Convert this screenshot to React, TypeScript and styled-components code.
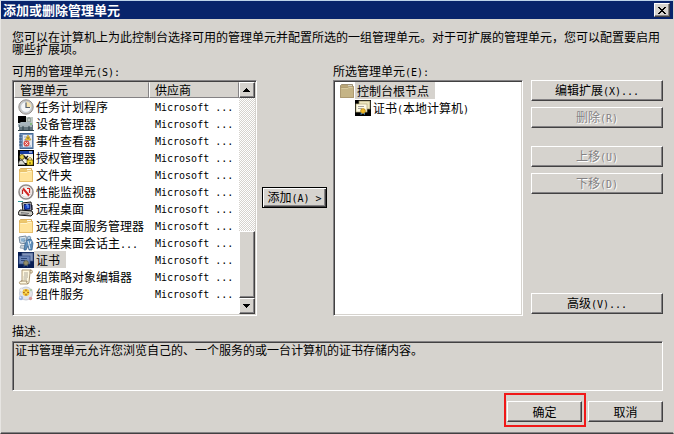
import React from "react";
import styled, { createGlobalStyle, css } from "styled-components";

const face = "#d6d3ce";
const shadow = "#848284";
const dark = "#424142";

const GlobalStyle = createGlobalStyle`
  * { box-sizing: border-box; }
  body {
    margin: 0;
    background: ${face};
    color: #000;
    font: 12px/12px "Noto Sans CJK SC", sans-serif;
  }
  button, textarea { font: inherit; color: inherit; }
`;

const sunken = css`
  border: 1px solid;
  border-color: ${shadow} #fff #fff ${shadow};
  box-shadow: inset 1px 1px 0 ${dark}, inset -1px -1px 0 ${face};
`;

const raised = css`
  border: 1px solid;
  border-color: #fff ${dark} ${dark} #fff;
  box-shadow: inset -1px -1px 0 ${shadow};
`;

const Dialog = styled.main`
  display: flex;
  flex-direction: column;
  border: 1px solid;
  border-color: #bdd3ea ${face} ${dark} #e7e5e2;
  box-shadow: inset 0 -1px 0 ${shadow};
  background: ${face};
`;

const TitleBar = styled.header`
  display: flex;
  align-items: center;
  justify-content: space-between;
  height: 18px;
  padding: 0 3px 0 2px;
  background: #08246b;
  color: #fff;
`;

const Title = styled.h1`
  margin: 0;
  font-size: 13px;
  line-height: 18px;
  font-weight: 700;
`;

const CloseButton = styled.button`
  ${raised}
  display: flex;
  align-items: center;
  justify-content: center;
  width: 16px;
  height: 14px;
  padding: 0;
  background: ${face};
`;

const Content = styled.div`
  display: flex;
  flex-direction: column;
  padding: 12px 10px 6px 11px;
`;

const Intro = styled.p`
  margin: 0;
`;

const Columns = styled.div`
  display: flex;
`;

const ListColumn = styled.section<{ $share: number }>`
  display: flex;
  flex-direction: column;
  flex: ${(p) => p.$share} 1 0;
  min-width: 0;
`;

const Caption = styled.div`
  height: 25px;
  padding-top: 10px;
  line-height: 12px;
`;

const ListBox = styled.div`
  ${sunken}
  display: flex;
  height: 236px;
  padding: 1px;
  background: #fff;
`;

const Latin = styled.span`
  font-family: "DejaVu Sans Mono", monospace;
  font-size: 10px;
  white-space: pre;
`;

const TableArea = styled.div`
  flex: 1;
  min-width: 0;
`;

const SnapInTable = styled.table`
  width: 100%;
  table-layout: fixed;
  border-collapse: separate;
  border-spacing: 0;
`;

const HeadCell = styled.th<{ $first?: boolean }>`
  height: 16px;
  width: ${(p) => (p.$first ? "60%" : "40%")};
  padding: 0 5px;
  border: 1px solid;
  border-color: ${face} ${shadow} ${shadow} #fff;
  background: ${face};
  font-weight: 400;
  text-align: left;
`;

const Cell = styled.td`
  height: 17px;
  padding: 0 0 0 4px;
  white-space: nowrap;
  overflow: hidden;
`;

const VendorCell = styled(Cell)`
  padding-left: 6px;
`;

const Entry = styled.div`
  display: flex;
  align-items: center;
  height: 17px;
`;

const EntryText = styled.span<{ $selected?: boolean }>`
  height: 17px;
  line-height: 17px;
  white-space: nowrap;
  padding: 0 6px 0 2px;
  background: ${(p) => (p.$selected ? face : "transparent")};
`;

const ScrollBar = styled.div`
  display: flex;
  flex: none;
  flex-direction: column;
  width: 16px;
  background: repeating-conic-gradient(#fff 0 25%, ${face} 0 50%) 0 0 / 2px 2px;
`;

const ScrollButton = styled.button`
  ${raised}
  display: flex;
  align-items: center;
  justify-content: center;
  height: 16px;
  padding: 0;
  background: ${face};
`;

const ScrollTrack = styled.div`
  display: flex;
  flex-direction: column;
  justify-content: flex-end;
  flex: 1;
`;

const ScrollThumb = styled.div`
  ${raised}
  height: 67px;
  background: ${face};
`;

const PushButton = styled.button`
  ${raised}
  height: 21px;
  padding: 0;
  background: ${face};
  line-height: 12px;
  text-align: center;
  white-space: nowrap;
  &:disabled {
    color: ${shadow};
    text-shadow: 1px 1px 0 #fff;
  }
`;

const AddArea = styled.div`
  display: flex;
  align-items: center;
  padding: 24px 6px 0 5px;
`;

const AddButton = styled(PushButton)`
  width: 65px;
  border-color: #000;
  box-shadow: inset 1px 1px 0 #fff, inset -1px -1px 0 ${dark}, inset -2px -2px 0 ${shadow};
`;

const Tree = styled.ul`
  flex: 1;
  margin: 0;
  padding: 0;
  list-style: none;
`;

const TreeItem = styled.li<{ $level: number }>`
  padding-left: ${(p) => 4 + p.$level * 16}px;
`;

const Actions = styled.div`
  display: flex;
  flex-direction: column;
  gap: 6px;
  width: 132px;
  margin-left: 8px;
  padding: 25px 0 2px;
`;

const ActionGroup = styled.div<{ $last?: boolean }>`
  display: flex;
  flex-direction: column;
  gap: 6px;
  margin-top: ${(p) => (p.$last ? "auto" : "12px")};
  &:first-child { margin-top: 0; }
`;

const DescriptionLabel = styled.label`
  height: 25px;
  padding-top: 9px;
`;

const Description = styled.textarea`
  ${sunken}
  display: block;
  width: 100%;
  height: 50px;
  padding: 2px;
  background: ${face};
  line-height: 12px;
  resize: none;
  outline: none;
`;

const Footer = styled.footer`
  display: flex;
  justify-content: flex-end;
  align-items: flex-start;
  gap: 2px;
  margin-top: 2px;
`;

const Marked = styled.div`
  border: 2px solid #f01818;
  padding: 6px 2px 3px 1px;
`;

const FooterButton = styled(PushButton)`
  display: block;
  width: 75px;
`;

const CancelArea = styled.div`
  padding-top: 8px;
`;

const Glyph = styled.svg`
  display: block;
  flex: none;
`;

function Mixed({ text }: { text: string }) {
  return (
    <>
      {text.split(/([ -~]+)/).map((part, i) =>
        i % 2 ? <Latin key={i}>{part}</Latin> : part
      )}
    </>
  );
}

function Icon({ children }: { children: React.ReactNode }) {
  return (
    <Glyph width="16" height="16" viewBox="0 0 16 16" aria-hidden="true">
      {children}
    </Glyph>
  );
}

const ClockIcon = () => (
  <Icon>
    <circle cx="8" cy="8" r="7.2" fill="#c9c6c2" stroke="#94918f" />
    <circle cx="8" cy="8" r="5.4" fill="#f5f6f6" stroke="#b9c4cf" strokeWidth=".8" />
    <path d="M8 8V2.6A5.4 5.4 0 0 1 13.4 8Z" fill="#f6e3ae" />
    <path d="M8 3.5V8.5H12" fill="none" stroke="#55606e" strokeWidth="1.2" />
  </Icon>
);

const DeviceIcon = () => (
  <Icon>
    <path d="M0 0H8V7H0Z" />
    <path d="M8 1H15V10H8Z" fill="#bfc7c1" />
    <path d="M10 2H12V6H10Z" fill="#fff" stroke="#52665e" strokeWidth=".7" />
    <path d="M0 8L3 6H12L15 8V11H0Z" fill="#a8b6bd" />
    <path d="M1 9H15V14H1Z" fill="#65777f" />
    <path d="M2 10H14" stroke="#e0e9eb" />
    <path d="M0 14.5H16M5 10V14M11 10V14" stroke="#2d4149" />
    <path d="M12 8H14" stroke="#5fbd45" />
  </Icon>
);

const EventIcon = () => (
  <Icon>
    <rect x="2" y=".5" width="13" height="15" fill="#7898c0" stroke="#466995" />
    <rect x="5" y="2" width="9" height="12" fill="#e7eaf0" />
    <path d="M1 3H4M1 6H4M1 9H4M1 12H4" stroke="#39597d" />
    <path d="M6 4H12M6 7H12M6 13H13" stroke="#95a9c5" />
    <path d="M10 2L13 7H7Z" fill="#f6cb34" stroke="#ad8b2c" strokeWidth=".6" />
    <path d="M10 4V6" stroke="#6c551d" />
    <circle cx="8.5" cy="10.5" r="3" fill="#d74f4b" />
    <path d="M7.2 9.2L9.8 11.8M9.8 9.2L7.2 11.8" stroke="#fff" strokeWidth=".9" />
  </Icon>
);

const AuthIcon = () => (
  <Icon>
    <path d="M0 0H16V16H0Z" />
    <rect x="2" y="1" width="13" height="12" fill="#f5f3e6" />
    <path d="M2 1H15V4H2Z" fill="#173c9f" />
    <path d="M11 2H14" stroke="#fff" />
    <circle cx="4" cy="7" r="2.5" fill="#e2ce42" stroke="#302c13" strokeWidth=".7" />
    <path d="M0 14Q1 9 4 10L8 15H0Z" fill="#d9d9d2" stroke="#000" strokeWidth=".7" />
    <path d="M6 6L12 12M7 9L10 6" stroke="#111" strokeWidth="1.4" />
    <rect x="9" y="10" width="6" height="5" fill="#f6dc2d" stroke="#6c580a" strokeWidth=".7" />
    <path d="M10.5 10V8.5Q12 6.5 13.5 8.5V10" fill="none" stroke="#ad8b12" />
    <path d="M12 12V14" stroke="#4a3b06" />
  </Icon>
);

const FolderIcon = ({ muted = false }: { muted?: boolean }) => (
  <Icon>
    <path d="M1.5 14V2.5L2.5 1.5H13.5V3.5H14.5V14.5H1.5Z" fill={muted ? "#bba779" : "#edc86c"} stroke={muted ? "#918263" : "#d0a14b"} strokeWidth=".8" />
    <path d="M9 2H13V4H9Z" fill={muted ? "#d7d5c9" : "#fffbed"} />
    <path d="M1.5 4.5H8.5L9.5 3.5H14.5V14.5H1.5Z" fill={muted ? "#c5b486" : "#ffe39a"} stroke={muted ? "#aa976d" : "#e4b961"} strokeWidth=".7" />
    <path d="M2.5 5.5H9L10 4.5H13.5" fill="none" stroke={muted ? "#d8ca9f" : "#fff3c6"} />
  </Icon>
);

const PerformanceIcon = () => (
  <Icon>
    <circle cx="8" cy="8" r="7" fill="#fff" stroke="#928c8a" strokeWidth="1.6" />
    <circle cx="8" cy="8" r="5.2" fill="#f8f8f7" stroke="#d7c8c5" strokeWidth=".8" />
    <path d="M4.5 10V6" fill="none" stroke="#bb2421" strokeWidth="1.2" />
    <path d="M5 4.5L11 11.5" fill="none" stroke="#d32623" strokeWidth="2" />
    <path d="M9 4.5H11.5V9" fill="none" stroke="#d32623" strokeWidth="1.2" />
  </Icon>
);

const RemoteIcon = () => (
  <Icon>
    <path d="M0 .5H5" stroke="#2c9a9a" />
    <path d="M4 2L13 1L14 9L5 10Z" fill="#e3e2da" stroke="#111" />
    <path d="M6 3.5L12 3V8L6.5 8.5Z" fill="#1745ca" stroke="#08165a" />
    <path d="M8 4L10 3.8V7" fill="none" stroke="#8db8f4" />
    <path d="M2 9L14 10L15 13L13 15L1 14L0 12Z" fill="#cbcac2" stroke="#111" />
    <path d="M3 11.5L11 12.5M3 13L10 14" stroke="#626266" strokeWidth=".8" />
    <path d="M14 4V9" fill="none" stroke="#191a38" />
  </Icon>
);

const SessionIcon = () => (
  <Icon>
    <path d="M1 2L8 1L9 9L2 8Z" fill="#dce7ef" stroke="#77899b" />
    <path d="M2.5 3.5L7 3V7L3 6.5Z" fill="#89b0cf" />
    <path d="M3 10L9 11L8 14L2 13Z" fill="#c7d1d9" stroke="#8394a2" strokeWidth=".7" />
    <circle cx="11" cy="3" r="1.8" fill="#b5cde2" stroke="#577d9f" strokeWidth=".7" />
    <circle cx="8" cy="7" r="2" fill="#d3dfeb" stroke="#567b9b" strokeWidth=".7" />
    <path d="M9 5L13 4L15 8L14 15H11L10 11L8 15H6L7 9Z" fill="#5f90bc" stroke="#345f89" strokeWidth=".7" />
    <path d="M10 6L12 14M13 6L12 9" stroke="#e7f1f9" />
  </Icon>
);

const CertificateIcon = ({ selected = false }: { selected?: boolean }) => (
  <Icon>
    <path d="M0 0H16V16H0Z" fill={selected ? "#071d54" : "#000"} />
    <rect x="4" y="1" width="11" height="8" fill={selected ? "#8294ba" : "#eee7bf"} stroke={selected ? "#435883" : "#8f875c"} strokeWidth=".7" />
    <rect x="1" y="4" width="11" height="8" fill={selected ? "#6d86b8" : "#fffbe4"} stroke={selected ? "#304b82" : "#b4aa78"} strokeWidth=".7" />
    <path d="M3 6.5H9M3 8.5H7" stroke={selected ? "#2c4679" : "#a6a5a0"} />
    <path d="M6 11L5.5 15L8 13.5L10 15V11Z" fill={selected ? "#344f7d" : "#428bc5"} />
    <circle cx="8" cy="11" r="2.4" fill={selected ? "#948e6b" : "#f1b925"} stroke={selected ? "#55563e" : "#a77f1b"} strokeWidth=".7" />
  </Icon>
);

const PolicyIcon = () => (
  <Icon>
    <path d="M4 1H13Q15 1 14 4H12L11 13Q11 15 9 15H2Q0 13 3 12H4Z" fill="#fff8df" stroke="#ad9a78" />
    <path d="M12 4V2Q12 1 13 1M3 12H9Q8 14 10 15" fill="none" stroke="#9c8869" />
    <path d="M6 4H10M6 6H10M5.5 8H10M5.5 10H9" stroke="#9a958a" strokeWidth=".8" />
  </Icon>
);

const ComponentIcon = () => (
  <Icon>
    <circle cx="8" cy="7.5" r="6.5" fill="#e2e4e9" stroke="#b3b9c6" strokeWidth=".7" />
    <circle cx="3.5" cy="4" r="2" fill="#f4f3ee" stroke="#c1c5ce" strokeWidth=".6" />
    <circle cx="8" cy="6.5" r="3.4" fill="#f4c535" />
    <path d="M8 3.5V9.5M5 6.5H11" stroke="#a8681a" strokeWidth="1.2" />
    <circle cx="8" cy="6.5" r="1.2" fill="#ffe46a" />
    <circle cx="3" cy="12" r="2.2" fill="#9fb5df" />
    <circle cx="2.4" cy="11.3" r=".9" fill="#e6efff" />
    <circle cx="12.5" cy="12.5" r="1.7" fill="#d99a98" />
    <circle cx="13" cy="4" r="1.3" fill="#b4cbb1" />
  </Icon>
);

const Arrow = ({ down = false }: { down?: boolean }) => (
  <Glyph width="8" height="4" viewBox="0 0 8 4" aria-hidden="true" shapeRendering="crispEdges">
    <path d={down ? "M0 0H7V1H6V2H5V3H4V4H3V3H2V2H1V1H0Z" : "M3 0H4V1H5V2H6V3H7V4H0V3H1V2H2V1H3Z"} />
  </Glyph>
);

const snapIns = [
  { name: "任务计划程序", icon: <ClockIcon /> },
  { name: "设备管理器", icon: <DeviceIcon /> },
  { name: "事件查看器", icon: <EventIcon /> },
  { name: "授权管理器", icon: <AuthIcon /> },
  { name: "文件夹", icon: <FolderIcon /> },
  { name: "性能监视器", icon: <PerformanceIcon /> },
  { name: "远程桌面", icon: <RemoteIcon /> },
  { name: "远程桌面服务管理器", icon: <FolderIcon /> },
  { name: "远程桌面会话主...", icon: <SessionIcon /> },
  { name: "证书", icon: <CertificateIcon selected />, selected: true },
  { name: "组策略对象编辑器", icon: <PolicyIcon /> },
  { name: "组件服务", icon: <ComponentIcon /> },
];

export default function App() {
  return (
    <>
      <GlobalStyle />
      <Dialog role="dialog" aria-labelledby="dialog-title">
        <TitleBar>
          <Title id="dialog-title">添加或删除管理单元</Title>
          <CloseButton aria-label="关闭">
            <Glyph width="8" height="7" viewBox="0 0 8 7" shapeRendering="crispEdges">
              <path d="M0 0H2V1H3V2H5V1H6V0H8V1H7V2H6V3H5V4H6V5H7V6H8V7H6V6H5V5H3V6H2V7H0V6H1V5H2V4H3V3H2V2H1V1H0Z" />
            </Glyph>
          </CloseButton>
        </TitleBar>
        <Content>
          <Intro>
            您可以在计算机上为此控制台选择可用的管理单元并配置所选的一组管理单元。对于可扩展的管理单元，您可以配置要启用哪些扩展项。
          </Intro>
          <Columns>
            <ListColumn $share={245}>
              <Caption id="available"><Mixed text="可用的管理单元(S):" /></Caption>
              <ListBox>
                <TableArea>
                  <SnapInTable aria-labelledby="available">
                    <thead>
                      <tr>
                        <HeadCell $first>管理单元</HeadCell>
                        <HeadCell>供应商</HeadCell>
                      </tr>
                    </thead>
                    <tbody>
                      {snapIns.map((s) => (
                        <tr key={s.name}>
                          <Cell>
                            <Entry>
                              {s.icon}
                              <EntryText $selected={s.selected}>
                                <Mixed text={s.name} />
                              </EntryText>
                            </Entry>
                          </Cell>
                          <VendorCell><Mixed text="Microsoft ..." /></VendorCell>
                        </tr>
                      ))}
                    </tbody>
                  </SnapInTable>
                </TableArea>
                <ScrollBar>
                  <ScrollButton aria-label="向上滚动"><Arrow /></ScrollButton>
                  <ScrollTrack><ScrollThumb /></ScrollTrack>
                  <ScrollButton aria-label="向下滚动"><Arrow down /></ScrollButton>
                </ScrollBar>
              </ListBox>
            </ListColumn>
            <AddArea>
              <AddButton><Mixed text="添加(A) >" /></AddButton>
            </AddArea>
            <ListColumn $share={190}>
              <Caption id="chosen"><Mixed text="所选管理单元(E):" /></Caption>
              <ListBox>
                <Tree aria-labelledby="chosen">
                  <TreeItem $level={0}>
                    <Entry>
                      <FolderIcon muted />
                      <EntryText $selected>控制台根节点</EntryText>
                    </Entry>
                  </TreeItem>
                  <TreeItem $level={1}>
                    <Entry>
                      <CertificateIcon />
                      <EntryText><Mixed text="证书(本地计算机)" /></EntryText>
                    </Entry>
                  </TreeItem>
                </Tree>
              </ListBox>
            </ListColumn>
            <Actions>
              <ActionGroup>
                <PushButton><Mixed text="编辑扩展(X)..." /></PushButton>
                <PushButton disabled><Mixed text="删除(R)" /></PushButton>
              </ActionGroup>
              <ActionGroup>
                <PushButton disabled><Mixed text="上移(U)" /></PushButton>
                <PushButton disabled><Mixed text="下移(D)" /></PushButton>
              </ActionGroup>
              <ActionGroup $last>
                <PushButton><Mixed text="高级(V)..." /></PushButton>
              </ActionGroup>
            </Actions>
          </Columns>
          <DescriptionLabel htmlFor="description"><Mixed text="描述:" /></DescriptionLabel>
          <Description
            id="description"
            readOnly
            value="证书管理单元允许您浏览自己的、一个服务的或一台计算机的证书存储内容。"
          />
          <Footer>
            <Marked><FooterButton>确定</FooterButton></Marked>
            <CancelArea><FooterButton>取消</FooterButton></CancelArea>
          </Footer>
        </Content>
      </Dialog>
    </>
  );
}
